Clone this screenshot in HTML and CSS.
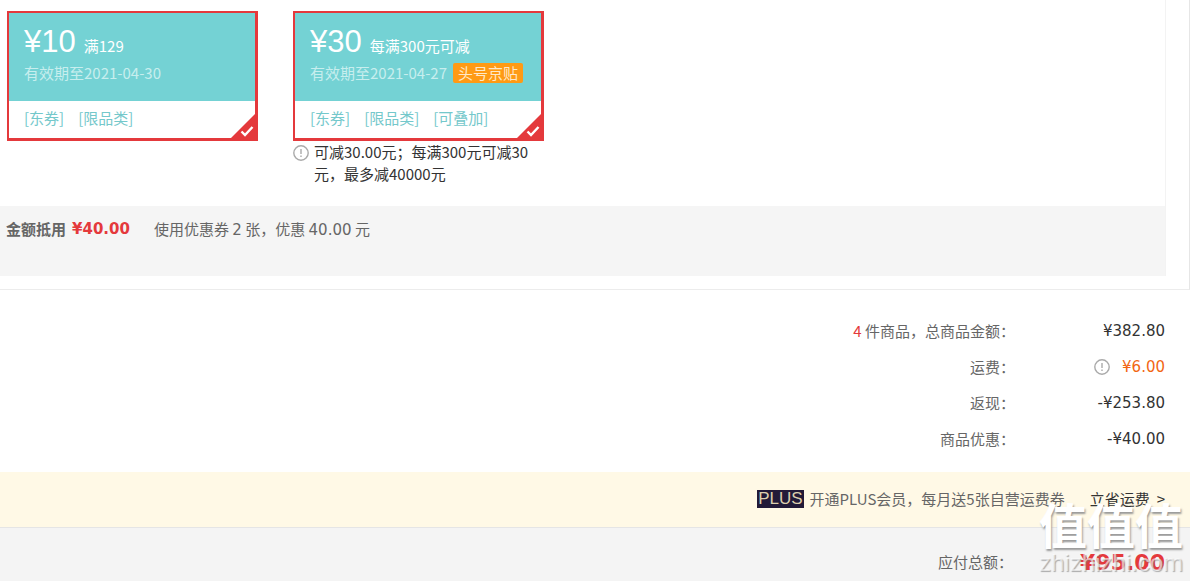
FILE: index.html
```html
<!DOCTYPE html>
<html lang="zh-CN">
<head>
<meta charset="utf-8">
<title>结算</title>
<link rel="stylesheet" href="styles.css">
</head>
<body>
<section class="discounts">
  <div class="panel">
    <div class="coupons">
      <div class="coupon-item">
        <label class="coupon">
          <span class="coupon-head">
            <span class="coupon-value"><span class="amount">¥10</span><span class="rule">满129</span></span>
            <span class="validity"><span>有效期至2021-04-30</span></span>
          </span>
          <span class="tags"><span>[东券]</span><span>[限品类]</span></span>
          <input class="pick" type="checkbox" name="coupon" checked>
          <svg class="tick" viewBox="0 0 14 12" aria-hidden="true"><path d="M1.5 6.5 5 10 12.5 2"/></svg>
        </label>
      </div>
      <div class="coupon-item">
        <label class="coupon">
          <span class="coupon-head">
            <span class="coupon-value"><span class="amount">¥30</span><span class="rule">每满300元可减</span></span>
            <span class="validity"><span>有效期至2021-04-27</span><span class="badge">头号京贴</span></span>
          </span>
          <span class="tags"><span>[东券]</span><span>[限品类]</span><span>[可叠加]</span></span>
          <input class="pick" type="checkbox" name="coupon" checked>
          <svg class="tick" viewBox="0 0 14 12" aria-hidden="true"><path d="M1.5 6.5 5 10 12.5 2"/></svg>
        </label>
        <p class="note">
          <svg class="info" viewBox="0 0 16 16" aria-hidden="true"><circle cx="8" cy="8" r="7.2"/><path d="M8 4v5M8 10.5v1.5"/></svg>
          <span>可减30.00元；每满300元可减30元，最多减40000元</span>
        </p>
      </div>
    </div>
    <div class="offset">
      <strong>金额抵用</strong>
      <strong class="offset-amount">¥40.00</strong>
      <span class="offset-detail">使用优惠券 <span class="num">2</span> 张，优惠 <span class="num">40.00</span> 元</span>
    </div>
  </div>
</section>

<dl class="summary">
  <div class="row"><dt><span class="count">4</span> 件商品，总商品金额：</dt><dd>¥382.80</dd></div>
  <div class="row"><dt>运费：</dt><dd class="freight"><svg class="info" viewBox="0 0 16 16" aria-hidden="true"><circle cx="8" cy="8" r="7.2"/><path d="M8 4v5M8 10.5v1.5"/></svg>¥6.00</dd></div>
  <div class="row"><dt>返现：</dt><dd>-¥253.80</dd></div>
  <div class="row"><dt>商品优惠：</dt><dd>-¥40.00</dd></div>
</dl>

<section class="plus">
  <span class="plus-logo">PLUS</span>
  <span class="plus-text">开通PLUS会员，每月送5张自营运费券</span>
  <a class="plus-link" href="#plus"><span>立省运费</span><span>&gt;</span></a>
</section>

<section class="total">
  <span class="total-label">应付总额：</span>
  <strong class="total-price">¥95.00</strong>
</section>

<div class="watermark"><span class="mark-name">值值值</span><span class="mark-site">zhizhizhi.com</span></div>
</body>
</html>
```

FILE: styles.css
```css
* { box-sizing: border-box; }

body {
  margin: 0;
  min-height: 100vh;
  position: relative;
  display: flex;
  flex-direction: column;
  overflow: hidden;
  background: #fff;
  color: #666;
  font: 15px/22px "Noto Sans CJK SC", sans-serif;
}

.discounts {
  margin-right: 1px;
  padding: 0 23px 13px 0;
  border-right: 1px solid #e6e6e6;
  border-bottom: 1px solid #ececec;
}

.panel { border-right: 1px solid #f3f3f3; }

.coupons {
  display: flex;
  align-items: flex-start;
  gap: 35px;
  padding: 11px 7px 21px;
}

.coupon-item { width: 251px; }

.coupon {
  position: relative;
  display: block;
  border: solid #e4393c;
  border-width: 2px 3px 3px 2px;
  cursor: pointer;
}

.coupon-head {
  display: block;
  height: 88px;
  padding: 11px 15px;
  background: #74d2d4;
}

.coupon-value {
  display: flex;
  align-items: baseline;
  gap: 8px;
  height: 38px;
  color: #fff;
}

.amount { font: 31px/36px "Liberation Sans", sans-serif; }

.validity {
  display: flex;
  align-items: center;
  gap: 6px;
  color: #c7eeee;
}

.badge {
  padding: 0 5px;
  border-radius: 2px;
  background: #ff9a14;
  color: #ffe9c8;
  line-height: 20px;
}

.tags {
  display: flex;
  gap: 14px;
  padding: 6px 15px 9px;
  color: #74c8cb;
}

.pick {
  position: absolute;
  right: -3px;
  bottom: -3px;
  width: 30px;
  height: 30px;
  margin: 0;
  appearance: none;
  background: #e4393c;
  clip-path: polygon(100% 0, 100% 100%, 0 100%);
}

.tick {
  position: absolute;
  right: 1px;
  bottom: 1px;
  width: 14px;
  height: 12px;
  fill: none;
  stroke: #fff;
  stroke-width: 2.4;
}

.note {
  display: flex;
  gap: 5px;
  margin: 0;
  color: #333;
}

.info {
  flex: none;
  width: 16px;
  height: 16px;
  fill: none;
  stroke: #aaa;
  stroke-width: 1.4;
}

.note .info { margin-top: 4px; }

.offset {
  display: flex;
  min-height: 70px;
  padding: 12px 6px;
  background: #f5f5f5;
}

.offset-amount {
  margin: 0 24px 0 6px;
  color: #e4393c;
  font-family: "DejaVu Sans", sans-serif;
}

.num { font-family: "DejaVu Sans", sans-serif; }

.summary {
  display: grid;
  gap: 14px;
  margin: 0;
  padding: 30px 26px 22px;
}

.row {
  display: grid;
  grid-template-columns: 1fr 150px;
  text-align: right;
}

.row dd {
  margin: 0;
  color: #333;
  font-family: "DejaVu Sans", sans-serif;
}

.count { color: #e4393c; }

.row .freight {
  display: flex;
  align-items: center;
  justify-content: flex-end;
  gap: 12px;
  color: #f26613;
}

.plus {
  display: flex;
  align-items: center;
  justify-content: flex-end;
  height: 56px;
  margin-right: 1px;
  padding: 0 25px 2px;
  border-bottom: 1px solid #e5e5e5;
  background: #fff9e6;
}

.plus-logo {
  padding: 0 1px;
  background: #221a38;
  color: #dccfae;
  font: 17px/18px "Liberation Sans", sans-serif;
}

.plus-text { margin: 0 25px 0 6px; }

.plus-link {
  display: flex;
  gap: 7px;
  color: #333;
  text-decoration: none;
}

.total {
  flex: 1;
  display: grid;
  grid-template-columns: 1fr 152px;
  align-items: start;
  margin-right: 1px;
  padding: 23px 25px 6px;
  background: #f4f4f4;
  text-align: right;
}

.total-price {
  color: #e4393c;
  font: bold 22px/24px "DejaVu Sans", sans-serif;
}

.watermark {
  position: absolute;
  right: 8px;
  bottom: 5px;
  display: grid;
  justify-items: end;
  color: #fff;
  pointer-events: none;
}

.mark-name {
  font-size: 48px;
  font-weight: bold;
  line-height: 54px;
  text-shadow: 1px 2px 2px #999;
}

.mark-site {
  color: rgba(255, 255, 255, 0.6);
  font: 24px/26px "Liberation Sans", sans-serif;
  text-shadow: 1px 1px 1px rgba(120, 120, 120, 0.6);
}
```
